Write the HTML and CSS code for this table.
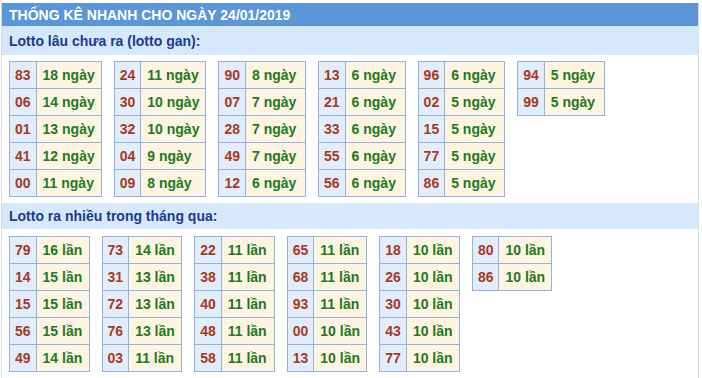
FILE: index.html
```html
<!DOCTYPE html>
<html lang="vi">
<head>
<meta charset="utf-8">
<title>Thống kê nhanh</title>
<link rel="stylesheet" href="styles.css">
</head>
<body>
<div class="box">
  <div class="title">THỐNG KÊ NHANH CHO NGÀY 24/01/2019</div>
  <div class="sub sub-first">Lotto lâu chưa ra (lotto gan):</div>
  <div class="tables tables-first">
    <table class="t">
      <tr><td class="n">83</td><td class="v">18 ngày</td></tr>
      <tr><td class="n">06</td><td class="v">14 ngày</td></tr>
      <tr><td class="n">01</td><td class="v">13 ngày</td></tr>
      <tr><td class="n">41</td><td class="v">12 ngày</td></tr>
      <tr><td class="n">00</td><td class="v">11 ngày</td></tr>
    </table>
    <table class="t">
      <tr><td class="n">24</td><td class="v">11 ngày</td></tr>
      <tr><td class="n">30</td><td class="v">10 ngày</td></tr>
      <tr><td class="n">32</td><td class="v">10 ngày</td></tr>
      <tr><td class="n">04</td><td class="v">9 ngày</td></tr>
      <tr><td class="n">09</td><td class="v">8 ngày</td></tr>
    </table>
    <table class="t">
      <tr><td class="n">90</td><td class="v">8 ngày</td></tr>
      <tr><td class="n">07</td><td class="v">7 ngày</td></tr>
      <tr><td class="n">28</td><td class="v">7 ngày</td></tr>
      <tr><td class="n">49</td><td class="v">7 ngày</td></tr>
      <tr><td class="n">12</td><td class="v">6 ngày</td></tr>
    </table>
    <table class="t">
      <tr><td class="n">13</td><td class="v">6 ngày</td></tr>
      <tr><td class="n">21</td><td class="v">6 ngày</td></tr>
      <tr><td class="n">33</td><td class="v">6 ngày</td></tr>
      <tr><td class="n">55</td><td class="v">6 ngày</td></tr>
      <tr><td class="n">56</td><td class="v">6 ngày</td></tr>
    </table>
    <table class="t">
      <tr><td class="n">96</td><td class="v">6 ngày</td></tr>
      <tr><td class="n">02</td><td class="v">5 ngày</td></tr>
      <tr><td class="n">15</td><td class="v">5 ngày</td></tr>
      <tr><td class="n">77</td><td class="v">5 ngày</td></tr>
      <tr><td class="n">86</td><td class="v">5 ngày</td></tr>
    </table>
    <table class="t">
      <tr><td class="n">94</td><td class="v">5 ngày</td></tr>
      <tr><td class="n">99</td><td class="v">5 ngày</td></tr>
    </table>
  </div>
  <div class="sub sub-second">Lotto ra nhiều trong tháng qua:</div>
  <div class="tables tables-second">
    <table class="t">
      <tr><td class="n">79</td><td class="v">16 lần</td></tr>
      <tr><td class="n">14</td><td class="v">15 lần</td></tr>
      <tr><td class="n">15</td><td class="v">15 lần</td></tr>
      <tr><td class="n">56</td><td class="v">15 lần</td></tr>
      <tr><td class="n">49</td><td class="v">14 lần</td></tr>
    </table>
    <table class="t">
      <tr><td class="n">73</td><td class="v">14 lần</td></tr>
      <tr><td class="n">31</td><td class="v">13 lần</td></tr>
      <tr><td class="n">72</td><td class="v">13 lần</td></tr>
      <tr><td class="n">76</td><td class="v">13 lần</td></tr>
      <tr><td class="n">03</td><td class="v">11 lần</td></tr>
    </table>
    <table class="t">
      <tr><td class="n">22</td><td class="v">11 lần</td></tr>
      <tr><td class="n">38</td><td class="v">11 lần</td></tr>
      <tr><td class="n">40</td><td class="v">11 lần</td></tr>
      <tr><td class="n">48</td><td class="v">11 lần</td></tr>
      <tr><td class="n">58</td><td class="v">11 lần</td></tr>
    </table>
    <table class="t">
      <tr><td class="n">65</td><td class="v">11 lần</td></tr>
      <tr><td class="n">68</td><td class="v">11 lần</td></tr>
      <tr><td class="n">93</td><td class="v">11 lần</td></tr>
      <tr><td class="n">00</td><td class="v">10 lần</td></tr>
      <tr><td class="n">13</td><td class="v">10 lần</td></tr>
    </table>
    <table class="t">
      <tr><td class="n">18</td><td class="v">10 lần</td></tr>
      <tr><td class="n">26</td><td class="v">10 lần</td></tr>
      <tr><td class="n">30</td><td class="v">10 lần</td></tr>
      <tr><td class="n">43</td><td class="v">10 lần</td></tr>
      <tr><td class="n">77</td><td class="v">10 lần</td></tr>
    </table>
    <table class="t">
      <tr><td class="n">80</td><td class="v">10 lần</td></tr>
      <tr><td class="n">86</td><td class="v">10 lần</td></tr>
    </table>
  </div>
</div>
</body>
</html>
```

FILE: styles.css
```css
html, body {
  margin: 0;
  padding: 0;
  background: #ffffff;
}

body {
  padding-top: 3px;
  font-family: "Liberation Sans", Arial, sans-serif;
}

.box {
  margin-left: 1px;
  width: 696px;
  border-left: 1px solid #d4dbe4;
  border-right: 1px solid #d4dbe4;
  min-height: 375px;
}

.title {
  height: 23px;
  line-height: 24px;
  background: #5b96d8;
  color: #ffffff;
  font-weight: bold;
  font-size: 14px;
  padding-left: 7px;
}

.sub {
  background: #d6e8fb;
  color: #1a3b8f;
  font-weight: bold;
  font-size: 14px;
  padding-left: 7px;
}

.sub-first {
  height: 29px;
  line-height: 30px;
}

.sub-second {
  height: 26px;
  line-height: 27px;
}

.tables {
  display: flex;
  align-items: flex-start;
  gap: 12px;
  padding-left: 7px;
}

.tables-first {
  padding-top: 6px;
  padding-bottom: 6px;
}

.tables-second {
  padding-top: 7px;
}

.t {
  border-collapse: collapse;
  font-size: 14px;
  font-weight: bold;
}

.t td {
  border: 1px solid #94b1e0;
  height: 26px;
  white-space: nowrap;
}

.t .n {
  background: #e2edfc;
  color: #a8391f;
  text-align: center;
  padding: 0 5px;
}

.t .v {
  background: #fef4e2;
  color: #1d7a1d;
  padding: 0 6px;
}

.tables-first .v {
  width: 47px;
}

.tables-second .v {
  width: 40px;
}
```
